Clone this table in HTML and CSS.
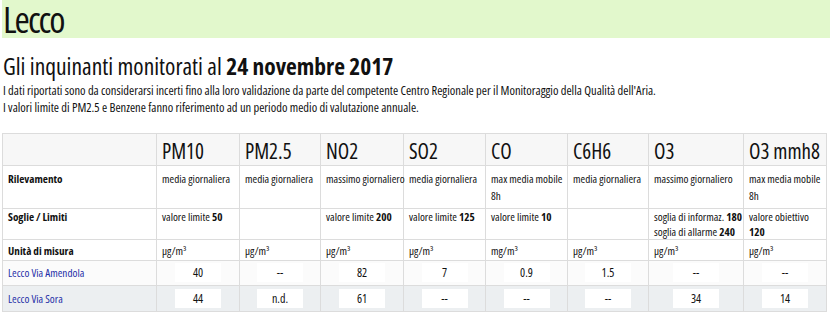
FILE: index.html
```html
<!DOCTYPE html>
<html lang="it">
<head>
    <meta charset="UTF-8">
    <title>Lecco - Qualità dell'aria</title>
    <link rel="stylesheet" href="styles.css">
</head>
<body>
    <div class="page">
        <h1 class="city">Lecco</h1>

        <h2 class="subtitle">Gli inquinanti monitorati al <strong>24 novembre 2017</strong></h2>
        <p class="note">I dati riportati sono da considerarsi incerti fino alla loro validazione da parte del competente Centro Regionale per il Monitoraggio della Qualità dell'Aria.</p>
        <p class="note">I valori limite di PM2.5 e Benzene fanno riferimento ad un periodo medio di valutazione annuale.</p>

        <table class="inquinanti">
            <colgroup>
                <col class="c-label">
                <col class="c-std">
                <col class="c-narrow">
                <col class="c-std">
                <col class="c-mid">
                <col class="c-mid">
                <col class="c-narrow">
                <col class="c-wide">
                <col class="c-std">
            </colgroup>
            <tr class="head">
                <th></th>
                <th>PM10</th>
                <th>PM2.5</th>
                <th>NO2</th>
                <th>SO2</th>
                <th>CO</th>
                <th>C6H6</th>
                <th>O3</th>
                <th>O3 mmh8</th>
            </tr>
            <tr class="r-rilev">
                <td class="label">Rilevamento</td>
                <td>media giornaliera</td>
                <td>media giornaliera</td>
                <td>massimo giornaliero</td>
                <td>media giornaliera</td>
                <td>max media mobile<br>8h</td>
                <td>media giornaliera</td>
                <td>massimo giornaliero</td>
                <td>max media mobile<br>8h</td>
            </tr>
            <tr class="r-soglie">
                <td class="label">Soglie / Limiti</td>
                <td>valore limite <b>50</b></td>
                <td></td>
                <td>valore limite <b>200</b></td>
                <td>valore limite <b>125</b></td>
                <td>valore limite <b>10</b></td>
                <td></td>
                <td>soglia di informaz. <b>180</b><br>soglia di allarme <b>240</b></td>
                <td>valore obiettivo<br><b>120</b></td>
            </tr>
            <tr class="r-unita">
                <td class="label">Unità di misura</td>
                <td>µg/m³</td>
                <td>µg/m³</td>
                <td>µg/m³</td>
                <td>µg/m³</td>
                <td>mg/m³</td>
                <td>µg/m³</td>
                <td>µg/m³</td>
                <td>µg/m³</td>
            </tr>
            <tr class="stazione">
                <td><a href="#">Lecco Via Amendola</a></td>
                <td><span class="val">40</span></td>
                <td><span class="val">--</span></td>
                <td><span class="val">82</span></td>
                <td><span class="val">7</span></td>
                <td><span class="val">0.9</span></td>
                <td><span class="val">1.5</span></td>
                <td><span class="val">--</span></td>
                <td><span class="val">--</span></td>
            </tr>
            <tr class="stazione alt">
                <td><a href="#">Lecco Via Sora</a></td>
                <td><span class="val">44</span></td>
                <td><span class="val">n.d.</span></td>
                <td><span class="val">61</span></td>
                <td><span class="val">--</span></td>
                <td><span class="val">--</span></td>
                <td><span class="val">--</span></td>
                <td><span class="val">34</span></td>
                <td><span class="val">14</span></td>
            </tr>
        </table>
    </div>
</body>
</html>
```

FILE: styles.css
```css
body {
    margin: 0;
    background-color: #ffffff;
    color: #111111;
    font-family: 'Open Sans', sans-serif;
    font-stretch: condensed;
}
.page {
    padding: 0 2px;
}
.city {
    margin: 0;
    padding: 0 1px;
    line-height: 38px;
    font-size: 37px;
    font-weight: normal;
    letter-spacing: -2px;
    background-color: #e2f8cc;
}
.subtitle {
    margin: 14px 0 4px 1px;
    font-size: 23.5px;
    line-height: 28px;
    font-weight: normal;
}
.subtitle strong {
    font-weight: bold;
}
.note {
    margin: 0 0 4px 1px;
    font-size: 12.5px;
    line-height: 13px;
}
.inquinanti {
    margin-top: 19px;
    width: 824px;
    border-collapse: collapse;
    table-layout: fixed;
    font-size: 11.2px;
    border: 1px solid #dcdcdc;
}
.c-label { width: 154px; }
.c-std { width: 83px; }
.c-narrow { width: 81px; }
.c-mid { width: 82px; }
.c-wide { width: 95px; }
.inquinanti th,
.inquinanti td {
    border: 1px solid #dcdcdc;
    padding: 4px 5px;
    text-align: left;
    vertical-align: top;
    line-height: 17px;
    white-space: nowrap;
}
.inquinanti .head th {
    height: 25px;
    padding: 5px 5px 1px;
    background-color: #f7f7f7;
    font-size: 21px;
    font-weight: normal;
    line-height: 25px;
}
.r-rilev td {
    height: 32px;
}
.r-soglie td {
    height: 30px;
    padding: 0 5px;
    line-height: 15px;
}
.r-unita td {
    height: 17px;
    padding: 2px 5px 1px;
}
.inquinanti .label {
    font-weight: bold;
}
.stazione td {
    padding: 2px 5px 3px;
    height: 19px;
    vertical-align: middle;
    background-color: #fbfbfb;
}
.stazione.alt td {
    padding: 3px 5px;
    background-color: #eceff1;
}
.stazione a {
    color: #1f2fa8;
    text-decoration: none;
}
.val {
    display: block;
    width: 46px;
    margin: 0 auto;
    background-color: #ffffff;
    text-align: center;
    line-height: 19px;
    font-size: 12px;
}
```
